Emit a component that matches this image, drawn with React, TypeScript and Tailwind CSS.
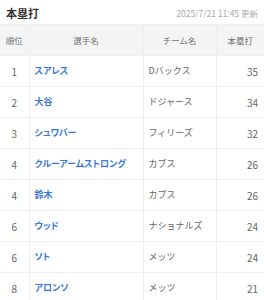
const rows = [
  { rank: 1, name: 'スアレス', team: 'Dバックス', hr: 35 },
  { rank: 2, name: '大谷', team: 'ドジャース', hr: 34 },
  { rank: 3, name: 'シュワバー', team: 'フィリーズ', hr: 32 },
  { rank: 4, name: 'クルーアームストロング', team: 'カブス', hr: 26 },
  { rank: 4, name: '鈴木', team: 'カブス', hr: 26 },
  { rank: 6, name: 'ウッド', team: 'ナショナルズ', hr: 24 },
  { rank: 6, name: 'ソト', team: 'メッツ', hr: 24 },
  { rank: 8, name: 'アロンソ', team: 'メッツ', hr: 21 },
];

export default function App() {
  return (
    <div className="w-[264px] h-[300px] overflow-hidden bg-white font-['Noto_Sans_CJK_JP','Noto_Sans',sans-serif]">
      <div className="flex items-center justify-between h-[24px] px-[6px] pt-[2px]">
        <h2 className="text-[11px] font-bold leading-none text-[#333]">本塁打</h2>
        <span className="text-[8.5px] leading-none text-[#aaa]">2025/7/21 11:45 更新</span>
      </div>
      <table className="w-full border-collapse table-fixed">
        <colgroup>
          <col className="w-[29px]" />
          <col className="w-[114px]" />
          <col className="w-[73px]" />
          <col />
        </colgroup>
        <thead>
          <tr className="h-[31px] bg-[#f4f4f4] text-[#707070] text-[8.5px]">
            <th className="font-normal border-y border-[#eee]">順位</th>
            <th className="font-normal border border-[#eee]">選手名</th>
            <th className="font-normal border border-[#eee]">チーム名</th>
            <th className="font-normal border-y border-[#eee]">本塁打</th>
          </tr>
        </thead>
        <tbody>
          {rows.map((r) => (
            <tr key={r.name} className="h-[31px] text-[#666]">
              <td className="text-center text-[10px] border-b border-[#eee]">{r.rank}</td>
              <td className="px-[5px] text-[9px] font-bold text-[#3a78d8] border border-t-0 border-[#eee] whitespace-nowrap [font-feature-settings:'palt']">
                {r.name}
              </td>
              <td className="px-[5px] text-[9px] border border-t-0 border-[#eee] whitespace-nowrap">{r.team}</td>
              <td className="pr-[6px] text-right text-[10px] border-b border-[#eee]">{r.hr}</td>
            </tr>
          ))}
        </tbody>
      </table>
    </div>
  );
}
